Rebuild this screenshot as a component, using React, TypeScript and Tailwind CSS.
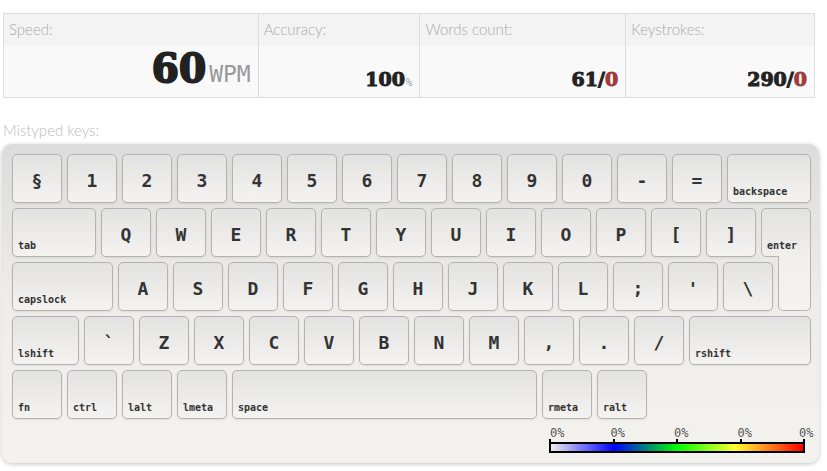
type KeyDef = { label: string; w: number; small?: boolean };

const k = (label: string, w = 50, small = false): KeyDef => ({ label, w, small });

const row1: KeyDef[] = [
  k("§"), k("1"), k("2"), k("3"), k("4"), k("5"), k("6"), k("7"), k("8"), k("9"), k("0"), k("-"), k("="),
  k("backspace", 84, true),
];
const row2: KeyDef[] = [
  k("tab", 84, true), k("Q"), k("W"), k("E"), k("R"), k("T"), k("Y"), k("U"), k("I"), k("O"), k("P"), k("["), k("]"),
];
const row3: KeyDef[] = [
  k("capslock", 101, true), k("A"), k("S"), k("D"), k("F"), k("G"), k("H"), k("J"), k("K"), k("L"), k(";"), k("'"), k("\\"),
];
const row4: KeyDef[] = [
  k("lshift", 67, true), k("`"), k("Z"), k("X"), k("C"), k("V"), k("B"), k("N"), k("M"), k(","), k("."), k("/"),
  k("rshift", 122, true),
];
const row5: KeyDef[] = [
  k("fn", 50, true), k("ctrl", 50, true), k("lalt", 50, true), k("lmeta", 50, true),
  k("space", 305, true), k("rmeta", 50, true), k("ralt", 50, true),
];

const mono = "font-['DejaVu_Sans_Mono',monospace]";
const thin = "font-['Lato','Open_Sans',sans-serif] font-light";
const heavy = "font-['DejaVu_Serif',serif] font-bold";

const keyFace =
  "h-[49px] shrink-0 rounded-[5px] border border-[#b3b3b3] bg-gradient-to-b from-[#e2e2e2] to-[#f4f3f0] shadow-[0_1px_2px_rgba(0,0,0,0.08)] text-[#333]";

const Key = ({ def }: { def: KeyDef }) => {
  if (def.small) {
    return (
      <div className={`${keyFace} flex items-end pl-[5px] pb-[5px]`} style={{ width: def.w }}>
        <span className={`${mono} text-[10px] font-bold leading-none`}>{def.label}</span>
      </div>
    );
  }
  return (
    <div className={`${keyFace} flex items-center justify-center pt-[5px]`} style={{ width: def.w }}>
      <span className={`${mono} text-[18px] font-bold leading-none`}>{def.label}</span>
    </div>
  );
};

const Row = ({ keys, children }: { keys: KeyDef[]; children?: React.ReactNode }) => (
  <div className="flex gap-[5px]">
    {keys.map((d) => (
      <Key key={d.label} def={d} />
    ))}
    {children}
  </div>
);

const StatHead = ({ text, w, last }: { text: string; w: number; last?: boolean }) => (
  <div
    className={`h-[32px] pt-[5px] pl-[5px] text-[15px] leading-[20px] text-[#aaa] ${thin} ${last ? "" : "border-r border-[#ddd]"}`}
    style={{ width: w }}
  >
    {text}
  </div>
);

const StatValue = ({ w, last, children }: { w: number; last?: boolean; children: React.ReactNode }) => (
  <div
    className={`h-[51px] flex items-end justify-end pr-[7px] pb-[8px] ${last ? "" : "border-r border-[#ddd]"}`}
    style={{ width: w }}
  >
    {children}
  </div>
);

const cols = [255, 162, 206, 188];

export default function App() {
  const ticks = [0, 25, 50, 75, 100];
  return (
    <div className="w-[827px] h-[471px] bg-white pt-[13px] pl-[2px] overflow-hidden">
      <div className="ml-[1px] w-[812px] border border-[#ddd]">
        <div className="flex bg-[#f3f3f3]">
          <StatHead text="Speed:" w={cols[0]} />
          <StatHead text="Accuracy:" w={cols[1]} />
          <StatHead text="Words count:" w={cols[2]} />
          <StatHead text="Keystrokes:" w={cols[3]} last />
        </div>
        <div className="flex bg-[#f9f9f9]">
          <StatValue w={cols[0]}>
            <div className="flex items-baseline pb-[1px]">
              <span className={`${heavy} text-[39px] leading-none text-[#222] [-webkit-text-stroke:2px_#222]`}>60</span>
              <span className={`${mono} text-[23px] leading-none text-[#999] ml-[3px]`}>WPM</span>
            </div>
          </StatValue>
          <StatValue w={cols[1]}>
            <div className="flex items-baseline">
              <span className={`${heavy} text-[19px] leading-none text-[#222] [-webkit-text-stroke:1px_#222]`}>100</span>
              <span className={`${mono} text-[11px] leading-none text-[#999] ml-[1px]`}>%</span>
            </div>
          </StatValue>
          <StatValue w={cols[2]}>
            <span className={`${heavy} text-[19px] leading-none text-[#222] [-webkit-text-stroke:1px_#222]`}>
              61/<span className="text-[#a33a3a] [-webkit-text-stroke:1px_#a33a3a]">0</span>
            </span>
          </StatValue>
          <StatValue w={cols[3]} last>
            <span className={`${heavy} text-[19px] leading-none text-[#222] [-webkit-text-stroke:1px_#222]`}>
              290/<span className="text-[#a33a3a] [-webkit-text-stroke:1px_#a33a3a]">0</span>
            </span>
          </StatValue>
        </div>
      </div>

      <div className={`mt-[22px] ml-[1px] h-[20px] flex items-center text-[15px] text-[#bbb] ${thin}`}>
        Mistyped keys:
      </div>

      <div className="mt-[4px] w-[817px] rounded-[10px] bg-gradient-to-b from-[#dcdcdc] via-[#eeedea] to-[#f3f2ef] shadow-[0_1px_4px_rgba(0,0,0,0.25)] pl-[10px] pr-[8px] pt-[10px] pb-[10px]">
        <div className="w-[799px] flex flex-col gap-[5px]">
          <Row keys={row1} />
          <Row keys={row2}>
            <div className="relative h-[49px] w-[50px] shrink-0 rounded-t-[5px] rounded-bl-[5px] border border-[#b3b3b3] bg-gradient-to-b from-[#e2e2e2] to-[#f0efec] flex items-end pl-[5px] pb-[5px] text-[#333]">
              <span className={`${mono} text-[10px] font-bold leading-none`}>enter</span>
            </div>
          </Row>
          <Row keys={row3}>
            <div className="relative z-10 mt-[-6px] h-[55px] w-[33px] shrink-0 rounded-b-[5px] border-x border-b border-[#b3b3b3] bg-gradient-to-b from-[#f0efec] to-[#f4f3f0]" />
          </Row>
          <Row keys={row4} />
          <Row keys={row5} />

          <div className="flex justify-end pr-[6px] mt-[2px]">
            <div className="relative w-[256px] h-[27px]">
              {ticks.map((t) => (
                <div key={t} className="absolute top-0 h-[27px]" style={{ left: `${(t / 100) * 254}px` }}>
                  <span
                    className={`${mono} absolute top-0 text-[12px] leading-[14px] text-[#555] ${t === 100 ? "left-[-4px]" : t === 0 ? "left-[1px]" : "left-[-2px]"}`}
                  >
                    0%
                  </span>
                  <div className="absolute top-[13px] left-0 w-[2px] h-[4px] bg-black" />
                </div>
              ))}
              <div className="absolute bottom-0 left-0 w-[256px] h-[11px] border-2 border-black bg-[linear-gradient(to_right,#eeeeee,#0000ff_25%,#00ff00_50%,#ffff33_73%,#ff0000)]" />
            </div>
          </div>
        </div>
      </div>
    </div>
  );
}
